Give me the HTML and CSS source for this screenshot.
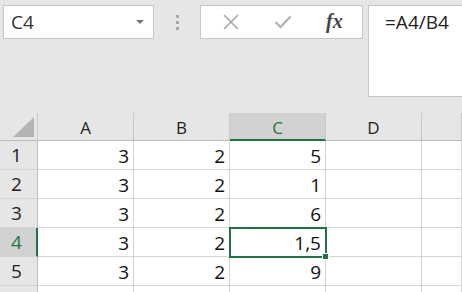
FILE: index.html
```html
<!DOCTYPE html>
<html lang="en">

<head>
    <meta charset="UTF-8">
    <title>Sheet</title>
    <link rel="stylesheet" href="styles.css">
</head>

<body>
    <div class="formula-bar">
        <div class="name-box">
            <span class="name">C4</span>
            <span class="arrow"></span>
        </div>
        <div class="grip">
            <span></span><span></span><span></span>
        </div>
        <div class="buttons">
            <svg class="icon" width="18" height="18" viewBox="0 0 18 18">
                <path d="M2 2 L16 16 M16 2 L2 16" stroke="#a8a8a8" stroke-width="1.6" fill="none" />
            </svg>
            <svg class="icon" width="18" height="18" viewBox="0 0 18 18">
                <path d="M1.5 9 L6.5 14 L16.5 3.5" stroke="#b4b4b4" stroke-width="2.4" fill="none" />
            </svg>
            <span class="fx">fx</span>
        </div>
        <div class="formula">=A4/B4</div>
    </div>

    <div class="sheet">
        <div class="corner"><span class="tri"></span></div>
        <div class="col-head">A</div>
        <div class="col-head">B</div>
        <div class="col-head active">C</div>
        <div class="col-head">D</div>
        <div class="col-head"></div>

        <div class="row-head">1</div>
        <div class="cell">3</div><div class="cell">2</div><div class="cell">5</div><div class="cell"></div><div class="cell"></div>

        <div class="row-head">2</div>
        <div class="cell">3</div><div class="cell">2</div><div class="cell">1</div><div class="cell"></div><div class="cell"></div>

        <div class="row-head">3</div>
        <div class="cell">3</div><div class="cell">2</div><div class="cell">6</div><div class="cell"></div><div class="cell"></div>

        <div class="row-head active">4</div>
        <div class="cell">3</div><div class="cell">2</div><div class="cell selected">1,5</div><div class="cell"></div><div class="cell"></div>

        <div class="row-head">5</div>
        <div class="cell">3</div><div class="cell">2</div><div class="cell">9</div><div class="cell"></div><div class="cell"></div>

        <div class="row-head"></div>
        <div class="cell"></div><div class="cell"></div><div class="cell"></div><div class="cell"></div><div class="cell"></div>
    </div>
</body>

</html>
```

FILE: styles.css
```css
body {
    margin: 0;
    padding: 0;
    background-color: #e6e6e6;
    font-family: "Open Sans", "Noto Sans", sans-serif;
    color: #222;
    overflow: hidden;
    height: 292px;
}

.formula-bar {
    display: flex;
    align-items: flex-start;
    padding: 5px 0 0 3px;
    height: 108px;
    box-sizing: border-box;
}

.name-box {
    width: 151px;
    height: 34px;
    box-sizing: border-box;
    background-color: #fff;
    border: 1px solid #c6c6c6;
    display: flex;
    align-items: center;
    justify-content: space-between;
    padding: 0 9px 0 7px;
}

.name {
    font-size: 19px;
    color: #333;
}

.arrow {
    width: 0;
    height: 0;
    border-left: 4px solid transparent;
    border-right: 4px solid transparent;
    border-top: 4px solid #777;
}

.grip {
    width: 46px;
    height: 34px;
    display: flex;
    flex-direction: column;
    align-items: center;
    justify-content: center;
    gap: 3px;
}

.grip span {
    width: 3px;
    height: 3px;
    background-color: #a6a6a6;
}

.buttons {
    width: 163px;
    height: 34px;
    box-sizing: border-box;
    background-color: #fff;
    border: 1px solid #c6c6c6;
    display: flex;
    align-items: center;
    padding-left: 21px;
    gap: 34px;
}

.fx {
    font-family: "Liberation Serif", serif;
    font-style: italic;
    font-weight: bold;
    font-size: 20px;
    color: #444;
    margin-bottom: 2px;
}

.formula {
    margin-left: 5px;
    flex: 1;
    height: 92px;
    box-sizing: border-box;
    background-color: #fff;
    border: 1px solid #c6c6c6;
    border-right: none;
    padding: 3px 0 0 16px;
    font-size: 19px;
    color: #222;
}

.sheet {
    display: grid;
    grid-template-columns: 38px 96px 96px 96px 96px 1fr;
    grid-template-rows: 28px repeat(6, 29px);
    margin-top: 5px;
}

.corner {
    position: relative;
    border-right: 1px solid #c8c8c8;
    border-bottom: 1px solid #bdbdbd;
}

.tri {
    position: absolute;
    right: 3px;
    bottom: 3px;
    width: 0;
    height: 0;
    border-left: 21px solid transparent;
    border-bottom: 20px solid #b4b4b4;
}

.col-head {
    display: flex;
    align-items: center;
    justify-content: center;
    font-size: 17px;
    color: #222;
    border-right: 1px solid #c8c8c8;
    border-bottom: 1px solid #bdbdbd;
    padding-top: 2px;
    box-sizing: border-box;
}

.col-head.active {
    background-color: #d2d2d2;
    color: #217346;
    border-bottom: 2px solid #217346;
}

.row-head {
    display: flex;
    align-items: center;
    padding-left: 11px;
    font-size: 19px;
    color: #222;
    border-right: 1px solid #bdbdbd;
    border-bottom: 1px solid #d4d4d4;
}

.row-head.active {
    background-color: #d2d2d2;
    color: #217346;
    border-right: 2px solid #217346;
}

.cell {
    background-color: #fff;
    border-right: 1px solid #d4d4d4;
    border-bottom: 1px solid #d4d4d4;
    display: flex;
    align-items: center;
    justify-content: flex-end;
    padding: 2px 4px 0 0;
    font-size: 19px;
    color: #111;
}

.cell.selected {
    position: relative;
    outline: 2px solid #217346;
    outline-offset: -1px;
}

.cell.selected::after {
    content: "";
    position: absolute;
    right: -4px;
    bottom: -4px;
    width: 5px;
    height: 5px;
    background-color: #217346;
    border: 1px solid #fff;
}
```
